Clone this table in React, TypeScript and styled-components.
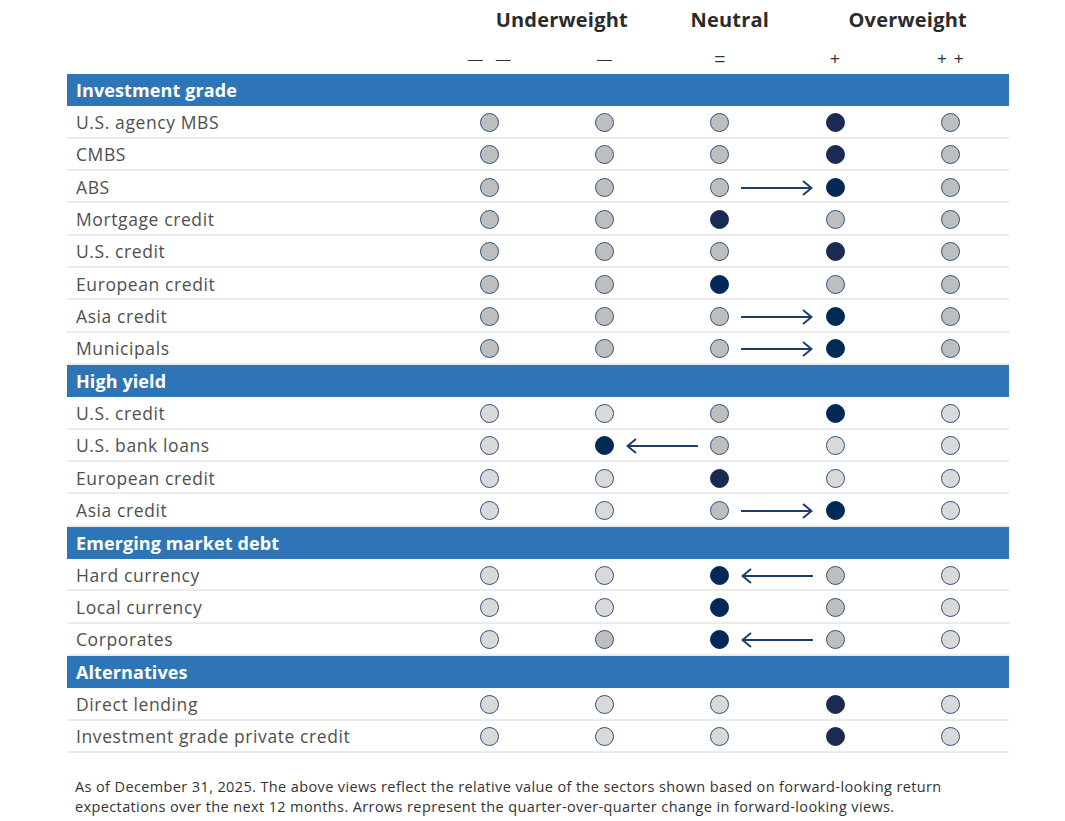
import React from "react";
import styled, { createGlobalStyle } from "styled-components";

type Fill = "m" | "l" | "d" | "n";
type Arrow = { from: number; to: number };
type Row = { label: string; dots: Fill[]; arrow?: Arrow };
type Section = { title: string; rows: Row[] };

const FILLS: Record<Fill, string> = {
  m: "#bebebe",
  l: "#d9d9d9",
  d: "#1b2a53",
  n: "#002956",
};

const COL_W = 115.3;
const LABEL_W = 364.5;
const ROW_H = 32.33;

const sections: Section[] = [
  {
    title: "Investment grade",
    rows: [
      { label: "U.S. agency MBS", dots: ["m", "m", "m", "d", "m"] },
      { label: "CMBS", dots: ["m", "m", "m", "d", "m"] },
      { label: "ABS", dots: ["m", "m", "m", "n", "m"], arrow: { from: 2, to: 3 } },
      { label: "Mortgage credit", dots: ["m", "m", "d", "m", "m"] },
      { label: "U.S. credit", dots: ["m", "m", "m", "d", "m"] },
      { label: "European credit", dots: ["m", "m", "n", "m", "m"] },
      { label: "Asia credit", dots: ["m", "m", "m", "n", "m"], arrow: { from: 2, to: 3 } },
      { label: "Municipals", dots: ["m", "m", "m", "n", "m"], arrow: { from: 2, to: 3 } },
    ],
  },
  {
    title: "High yield",
    rows: [
      { label: "U.S. credit", dots: ["l", "l", "m", "n", "l"] },
      { label: "U.S. bank loans", dots: ["l", "n", "m", "l", "l"], arrow: { from: 2, to: 1 } },
      { label: "European credit", dots: ["l", "l", "d", "l", "l"] },
      { label: "Asia credit", dots: ["l", "l", "m", "n", "l"], arrow: { from: 2, to: 3 } },
    ],
  },
  {
    title: "Emerging market debt",
    rows: [
      { label: "Hard currency", dots: ["l", "l", "n", "m", "l"], arrow: { from: 3, to: 2 } },
      { label: "Local currency", dots: ["l", "l", "n", "m", "l"] },
      { label: "Corporates", dots: ["l", "m", "n", "m", "l"], arrow: { from: 3, to: 2 } },
    ],
  },
  {
    title: "Alternatives",
    rows: [
      { label: "Direct lending", dots: ["l", "l", "l", "d", "l"] },
      { label: "Investment grade private credit", dots: ["l", "l", "l", "d", "l"] },
    ],
  },
];

// glyphs shown under each column, with the gap between repeated marks
const symbols: { marks: string[]; gap: number; size: number }[] = [
  { marks: ["—", "—"], gap: 13, size: 15 },
  { marks: ["—"], gap: 0, size: 15 },
  { marks: ["="], gap: 0, size: 19 },
  { marks: ["+"], gap: 0, size: 17 },
  { marks: ["+", "+"], gap: 7, size: 17 },
];

const GlobalStyle = createGlobalStyle`
  body {
    margin: 0;
    background: #ffffff;
    font-family: "Open Sans", "Noto Sans", sans-serif;
  }
`;

const Page = styled.div`
  width: 942px;
  padding: 0 0 0 67px;
`;

const Grid = styled.div`
  display: grid;
  grid-template-columns: ${LABEL_W}px repeat(5, ${COL_W}px);
  align-items: center;
`;

const TitleRow = styled(Grid)`
  height: 39px;
`;

const Title = styled.div<{ $col: number; $span: number }>`
  grid-column: ${(p) => p.$col} / span ${(p) => p.$span};
  text-align: center;
  padding-left: ${(p) => (p.$span > 1 ? 30 : 20)}px;
  font-size: 20px;
  font-weight: 700;
  color: #2b2b2b;
  letter-spacing: 0.2px;
`;

const SymbolRow = styled(Grid)`
  height: 35px;
`;

const Symbol = styled.div<{ $gap: number; $size: number }>`
  display: flex;
  justify-content: center;
  align-items: center;
  height: 20px;
  gap: ${(p) => p.$gap}px;
  font-family: "Liberation Sans", sans-serif;
  font-size: ${(p) => p.$size}px;
  color: #333;
  padding-top: 4px;
`;

const SectionHead = styled.div`
  height: ${ROW_H}px;
  background: #2e75b8;
  color: #ffffff;
  font-size: 18px;
  font-weight: 700;
  letter-spacing: 0.1px;
  display: flex;
  align-items: center;
  padding-left: 9px;
`;

const DataRow = styled(Grid)`
  height: ${ROW_H}px;
  box-sizing: border-box;
  border-bottom: 2px solid #ebebeb;
`;

const Label = styled.div`
  grid-row: 1;
  grid-column: 1;
  padding-left: 9px;
  font-size: 17.5px;
  letter-spacing: 0.6px;
  color: #4f4f4f;
  white-space: nowrap;
  padding-top: 1px;
`;

const Cell = styled.div<{ $col: number }>`
  grid-row: 1;
  grid-column: ${(p) => p.$col};
  display: flex;
  justify-content: center;
  align-items: center;
  padding-top: 2px;
`;

const Dot = styled.span<{ $fill: Fill }>`
  width: 19px;
  height: 19px;
  box-sizing: border-box;
  border-radius: 50%;
  background: ${(p) => FILLS[p.$fill]};
  border: 1.5px solid
    ${(p) => (p.$fill === "m" || p.$fill === "l" ? "#2c5185" : FILLS[p.$fill])};
`;

const ArrowBox = styled.div<{ $col: number }>`
  grid-row: 1;
  grid-column: ${(p) => p.$col} / span 2;
  justify-self: center;
  display: flex;
  padding-top: 3px;
`;

const Footer = styled.p`
  margin: 24px 0 0 8px;
  font-size: 14.5px;
  line-height: 20px;
  color: #333;
  letter-spacing: 0.38px;
  white-space: nowrap;
`;

const ArrowIcon: React.FC<{ left: boolean }> = ({ left }) => (
  <svg
    width="72"
    height="16"
    viewBox="0 0 72 16"
    style={{ transform: left ? "scaleX(-1)" : undefined }}
  >
    <line x1="0" y1="8" x2="70" y2="8" stroke="#1d3d6b" strokeWidth="2" />
    <polyline
      points="62,1 70.5,8 62,15"
      fill="none"
      stroke="#1d3d6b"
      strokeWidth="2"
    />
  </svg>
);

const App: React.FC = () => {
  return (
    <Page>
      <GlobalStyle />
      <TitleRow>
        <Title $col={2} $span={2}>Underweight</Title>
        <Title $col={4} $span={1}>Neutral</Title>
        <Title $col={5} $span={2}>Overweight</Title>
      </TitleRow>
      <SymbolRow>
        <span />
        {symbols.map((s, i) => (
          <Symbol key={i} $gap={s.gap} $size={s.size}>
            {s.marks.map((m, j) => (
              <span key={j}>{m}</span>
            ))}
          </Symbol>
        ))}
      </SymbolRow>
      {sections.map((sec) => (
        <React.Fragment key={sec.title}>
          <SectionHead>{sec.title}</SectionHead>
          {sec.rows.map((row) => (
            <DataRow key={sec.title + row.label}>
              <Label>{row.label}</Label>
              {row.dots.map((f, i) => (
                <Cell key={i} $col={i + 2}>
                  <Dot $fill={f} />
                </Cell>
              ))}
              {row.arrow && (
                <ArrowBox $col={Math.min(row.arrow.from, row.arrow.to) + 2}>
                  <ArrowIcon left={row.arrow.to < row.arrow.from} />
                </ArrowBox>
              )}
            </DataRow>
          ))}
        </React.Fragment>
      ))}
      <Footer>
        As of December 31, 2025. The above views reflect the relative value of the sectors shown based on forward-looking return
        <br />
        expectations over the next 12 months. Arrows represent the quarter-over-quarter change in forward-looking views.
      </Footer>
    </Page>
  );
};

export default App;
